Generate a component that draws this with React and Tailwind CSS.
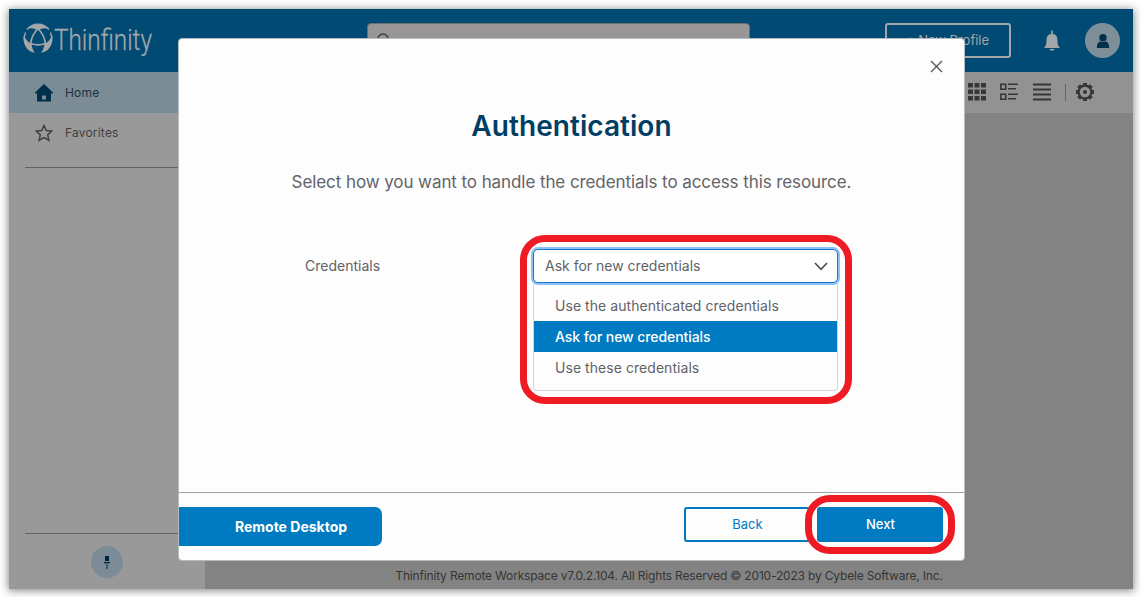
import { useState } from 'react'
import clsx from 'clsx'

const opciones = [
  'Use the authenticated credentials',
  'Ask for new credentials',
  'Use these credentials',
]

const Logo = () => (
  <svg width="160" height="50" viewBox="0 0 160 50" fill="none" className="overflow-visible">
    <g stroke="#a4a7aa">
      <path d="M5.500 27.500 A14 14 0 0 1 2.500 12.500 M4 9.500 A14 14 0 0 1 26 9.500 M27.500 12.500 A14 14 0 0 1 24.500 27.500" strokeWidth="1.400" />
      <path d="M15 8.500 C18.500 12 21.500 17.500 22.500 23.500 C17.500 25.200 12.500 25.200 7.500 23.500 C8.500 17.500 11.500 12 15 8.500Z" strokeWidth="1.700" />
    </g>
    <g fill="#a4a7aa">
      <path d="M4.500 9 C9 2.500 21 2.500 25.500 9 C22 7.800 18.500 8.300 15 10.500 C11.500 8.300 8 7.800 4.500 9Z" />
      <path d="M0.800 15 C-0.500 24 3.500 31.500 12 32.800 C10 30.500 8.800 27.500 8.600 24 C5 22.300 2 19 0.800 15Z" />
      <path d="M29.200 15 C30.500 24 26.500 31.500 18 32.800 C20 30.500 21.200 27.500 21.400 24 C25 22.300 28 19 29.200 15Z" />
    </g>
    <text
      x="31"
      y="30"
      fontSize="30"
      textLength="98"
      lengthAdjust="spacingAndGlyphs"
      className="fill-[#a4a7aa] stroke-[#a4a7aa] stroke-[0.3px] font-['Roboto',sans-serif] font-light"
    >
      Thinfinity
    </text>
  </svg>
)

const HomeIcon = () => (
  <svg width="18" height="18" viewBox="0 0 18 18" fill="#00304c">
    <path fillRule="evenodd" d="M9 0 L18 8.500 V9.500 H16 V17.500 H2 V9.500 H0 V8.500Z M7 11.500 V15.500 H11 V11.500Z" />
  </svg>
)

const StarIcon = () => (
  <svg width="18" height="18" viewBox="0 0 18 18" fill="none" stroke="#3f3f40" strokeWidth="1.500">
    <path d="M9 1.500 L11.300 6.500 L16.800 7.100 L12.700 10.800 L13.900 16.200 L9 13.500 L4.100 16.200 L5.300 10.800 L1.200 7.100 L6.700 6.500Z" />
  </svg>
)

const BellIcon = () => (
  <svg width="16" height="22" viewBox="0 0 16 22" fill="#a4a7aa">
    <path d="M7.200 0.500 H8.800 V4 C12 4.300 13.500 6.500 13.500 10 C13.500 14 13.800 15.500 15.500 17 V18 H0.500 V17 C2.200 15.500 2.500 14 2.500 10 C2.500 6.500 4 4.300 7.200 4Z" />
    <path d="M5.500 19 H10.500 C10 21.300 6 21.300 5.500 19Z" />
  </svg>
)

const UserIcon = () => (
  <svg width="14" height="14" viewBox="0 0 14 14" fill="#00304c">
    <circle cx="7" cy="3.800" r="3.700" />
    <path d="M0.800 14 C0.800 10.500 1.800 8.200 4 7.200 C5.800 8.400 8.200 8.400 10 7.200 C12.200 8.200 13.200 10.500 13.200 14Z" />
  </svg>
)

const GridIcon = () => (
  <svg width="18" height="18" viewBox="0 0 18 18" fill="#373737">
    {[0, 6.5, 13].map((y) =>
      [0, 6.5, 13].map((x) => <rect key={`${x}-${y}`} x={x} y={y} width="5" height="4.500" />)
    )}
  </svg>
)

const ListIcon = () => (
  <svg width="18" height="18" viewBox="0 0 18 18" fill="none" stroke="#373737" strokeWidth="1.600">
    <path d="M0.800 1.300 H5.700 V6.200 H0.800Z M0.800 11.300 H5.700 V16.200 H0.800Z M8 1.300 H18 M8 5.700 H16 M8 11.300 H18 M8 15.700 H16" />
  </svg>
)

const LinesIcon = () => (
  <svg width="18" height="18" viewBox="0 0 18 18" fill="none" stroke="#373737" strokeWidth="1.800">
    <path d="M0 1.500 H18 M0 6.500 H18 M0 11.500 H18 M0 16.500 H18" />
  </svg>
)

const GearIcon = () => (
  <svg width="18" height="18" viewBox="-9 -9 18 18" fill="none" stroke="#373737">
    <circle r="6.400" strokeWidth="2.200" />
    {[0, 45, 90, 135, 180, 225, 270, 315].map((a) => (
      <path key={a} d="M0 -6.500 V-9" strokeWidth="4" transform={`rotate(${a})`} />
    ))}
    <circle r="2" fill="#373737" stroke="none" />
  </svg>
)

const PinIcon = () => (
  <svg width="6" height="13" viewBox="0 0 6 13" fill="#00263d">
    <path d="M1 0 H5 V5 H1Z M0 6 H6 V7.300 H0Z M2.500 8 H3.500 V13 H2.500Z" />
  </svg>
)

const App = () => {
  const [seleccion, setSeleccion] = useState('Ask for new credentials')

  return (
    <div className="relative h-[597px] w-[1141px] overflow-hidden bg-white p-[9px] pb-2 pr-2 font-['Inter',sans-serif]">
      <div className="flex h-full flex-col bg-[#838383] shadow-[0_1px_8px_1px_rgba(0,0,0,0.45)]">

        {/* Header */}
        <header className="flex h-[63px] shrink-0 bg-[#004a73] pl-[14px] pr-[13px]">
          <div className="mt-[11px]">
            <Logo />
          </div>
          <div className="ml-[184px] mt-[14px] flex h-[34px] w-[383px] rounded border border-[#6d6d6d] bg-[#999697] pl-[9px] pt-[9px]">
            <svg width="13" height="13" viewBox="0 0 13 13" fill="none" stroke="#3d3d3d" strokeWidth="1.400">
              <circle cx="6" cy="6" r="5" />
            </svg>
          </div>
          <div className="ml-auto flex items-center">
            <button className="h-[35px] w-[126px] rounded-[3px] border-2 border-[#a4a7aa] pr-px text-[13px] text-[#a4a7aa]">
              + New Profile
            </button>
            <div className="ml-[33px]">
              <BellIcon />
            </div>
            <div className="ml-[25px] flex size-[35px] items-center justify-center rounded-full bg-[#7f8f99]">
              <UserIcon />
            </div>
          </div>
        </header>

        <div className="flex min-h-0 flex-1">
          {/* Sidebar */}
          <aside className="flex w-[196px] shrink-0 flex-col bg-[#999] text-[12px] tracking-[0.2px]">
            <div className="flex h-[41px] items-center gap-3 bg-[#7b8c96] pl-[26px] text-[#1b3142]">
              <HomeIcon />
              <span className="pt-px">Home</span>
            </div>
            <div className="flex h-10 items-center gap-3 pl-[26px] text-[#3f3f40]">
              <StarIcon /> Favorites
            </div>
            <div className="ml-4 mt-[14px] border-t border-[#626262]" />
            <div className="ml-4 mt-auto border-t border-[#626262]" />
            <div className="flex h-[55px] justify-center pt-3">
              <div className="flex size-8 items-center justify-center rounded-full bg-[#7b8c96]">
                <PinIcon />
              </div>
            </div>
          </aside>

          {/* Content */}
          <main className="flex flex-1 flex-col">
            <div className="flex h-[41px] items-center justify-end bg-[#929292] pb-px pr-[39px]">
              <GridIcon />
              <div className="ml-[14px] flex gap-[15px]">
                <ListIcon />
                <LinesIcon />
              </div>
              <div className="ml-[14px] h-[17px] w-px bg-[#666]" />
              <div className="ml-[10px]">
                <GearIcon />
              </div>
            </div>
            <footer className="mt-auto whitespace-nowrap pb-[5px] text-center text-[12px] leading-4 tracking-[-0.175px] text-[#353535]">
              Thinfinity Remote Workspace v7.0.2.104. All Rights Reserved © 2010-2023 by Cybele Software, Inc.
            </footer>
          </main>
        </div>
      </div>

      {/* Authentication dialog */}
      <div className="absolute left-[178px] top-[38px] flex h-[523px] w-[787px] flex-col rounded border border-[#b5bcc0] bg-[#fefdfe]">
        <button className="absolute right-[21px] top-[21px]">
          <svg width="13" height="13" viewBox="0 0 13 13" fill="none" stroke="#54585c" strokeWidth="1.400">
            <path d="M1 1 L12 12 M12 1 L1 12" />
          </svg>
        </button>

        <h1 className="mt-[69px] text-center text-[28px] font-semibold leading-9 tracking-[0.05px] text-[#003e63]">
          Authentication
        </h1>
        <p className="mt-[26px] text-center text-[17px] leading-6 tracking-[-0.085px] text-[#626467]">
          Select how you want to handle the credentials to access this resource.
        </p>

        <div className="mt-[55px] flex pl-[126px] text-sm text-[#616367]">
          <label className="w-[228px] pt-[7px]">Credentials</label>
          <div className="w-[305px]">
            <div className="flex h-[34px] items-center justify-between rounded-[5px] border border-[#1b75c4] bg-white pl-[11px] pr-[9px] ring-2 ring-[#8cc2f8]">
              <span>{seleccion}</span>
              <svg width="14" height="9" viewBox="0 0 14 9" fill="none" stroke="#4a4e54" strokeWidth="1.600">
                <path d="M1 1 L7 7.300 L13 1" />
              </svg>
            </div>
            <ul className="h-[108px] rounded-b border border-t-0 border-[#d3d5d8] pt-[7px]">
              {opciones.map((opcion) => (
                <li
                  key={opcion}
                  onClick={() => setSeleccion(opcion)}
                  className={clsx(
                    'flex h-[31px] items-center pl-[21px]',
                    opcion === seleccion
                      ? 'bg-[#007bc1] font-medium tracking-[-0.08px] text-white'
                      : 'tracking-[0.05px]'
                  )}
                >
                  {opcion}
                </li>
              ))}
            </ul>
          </div>
        </div>

        {/* Footer */}
        <div className="mt-auto flex h-[68px] items-start justify-between border-t border-[#a0a0a4] pr-[21px] pt-[14px]">
          <div className="flex h-[39px] w-[203px] items-center justify-center rounded-r-[7px] bg-[#007bc1] pl-[21px] text-sm font-bold text-white">
            Remote Desktop
          </div>
          <div className="flex gap-[7px] text-[13px]">
            <button className="h-[35px] w-[126px] rounded-[3px] border-2 border-[#007bc1] pl-px text-[#007bc1]">
              Back
            </button>
            <button className="h-[35px] w-[126px] rounded-[3px] bg-[#007bc1] pl-px font-medium text-white">
              Next
            </button>
          </div>
        </div>
      </div>

      {/* Highlights */}
      <div className="pointer-events-none absolute left-[520px] top-[235px] h-[169px] w-[332px] rounded-[25px] border-[7px] border-[#ee1b24]" />
      <div className="pointer-events-none absolute left-[805px] top-[495px] h-[59px] w-[150px] rounded-[25px] border-[7px] border-[#ee1b24]" />
    </div>
  )
}

export default App
